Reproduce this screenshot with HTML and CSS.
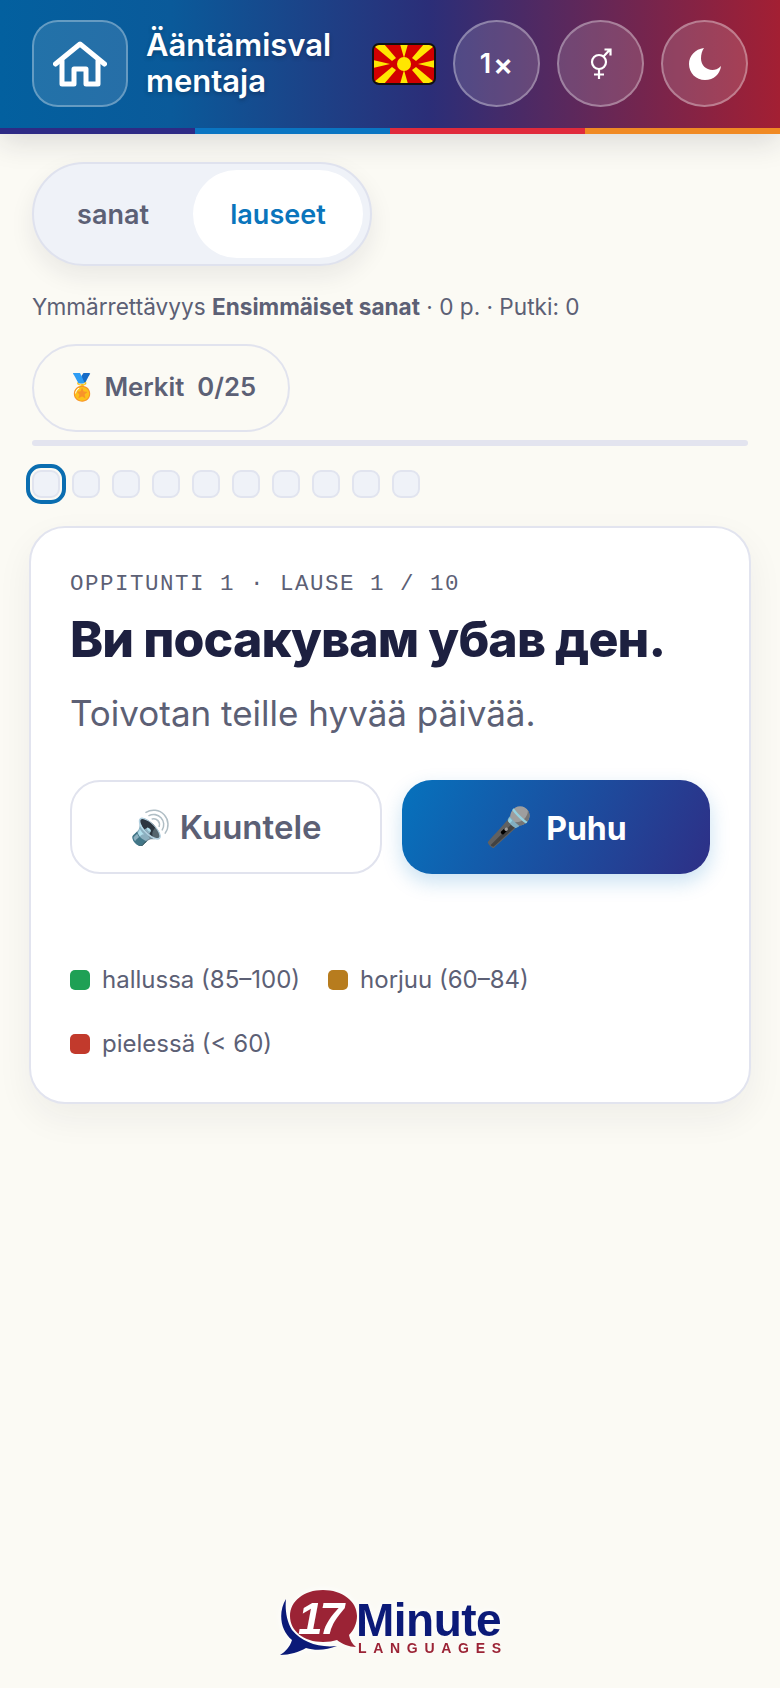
FILE: index.html
```html
<!DOCTYPE html>
<html lang="fi">
<head>
    <title>Ääntämisvalmentaja</title>
    <meta name="viewport" content="width=device-width, initial-scale=1.0">
    <link rel="stylesheet" href="styles.css">
</head>
<body>
    <header class="topbar">
        <div class="topbar-row">
            <button class="home-btn" aria-label="Koti">
                <svg width="54" height="46" viewBox="0 0 54 46" fill="none" stroke="#fff" stroke-width="5" stroke-linecap="round" stroke-linejoin="round">
                    <path d="M2.5 23 27 3 51.5 23"/>
                    <path d="M9 20V43H21V28H33V43H45V20"/>
                </svg>
            </button>
            <h1 class="app-title">Ääntämisval<br>mentaja</h1>
            <svg class="flag" viewBox="0 0 64 42">
                <rect x="1" y="1" width="62" height="40" rx="6" fill="#d20000"/>
                <g fill="#ffe600">
                    <path d="M28 1h8l-4 14z"/>
                    <path d="M28 41h8l-4-14z"/>
                    <path d="M1 17v8l17-4z"/>
                    <path d="M63 17v8l-17-4z"/>
                    <path d="M2 3 12 1 24 15 20 18z"/>
                    <path d="M62 3 52 1 40 15 44 18z"/>
                    <path d="M2 39 12 41 24 27 20 24z"/>
                    <path d="M62 39 52 41 40 27 44 24z"/>
                    <circle cx="32" cy="21" r="7"/>
                </g>
                <rect x="1" y="1" width="62" height="40" rx="6" fill="none" stroke="#111" stroke-width="2"/>
            </svg>
            <button class="round-btn speed-btn">1<span class="times">×</span></button>
            <button class="round-btn" aria-label="Sukupuoli">
                <svg width="22" height="32" viewBox="0 0 22 32" fill="none" stroke="#fff" stroke-width="2.2">
                    <circle cx="9" cy="14" r="7"/>
                    <path d="M9 21v10M4 26.500h10M13.500 8.500 20 1.500M14.500 1.500H20.500V7.500"/>
                </svg>
            </button>
            <button class="round-btn" aria-label="Tumma tila">
                <svg width="32" height="32" viewBox="0 0 32 32">
                    <path fill="#fff" d="M15 0C6 1 0 8 0 16C0 25 7 32 16 32C25 32 31 26 32 18C29 21 26 22 23.500 22C17 22 12 17 12 10.500C12 6 13 3 15 0z"/>
                </svg>
            </button>
        </div>
        <div class="stripe">
            <span class="stripe-indigo"></span>
            <span class="stripe-blue"></span>
            <span class="stripe-red"></span>
            <span class="stripe-orange"></span>
        </div>
    </header>

    <main class="content">
        <div class="segment">
            <button class="segment-item">sanat</button>
            <button class="segment-item active">lauseet</button>
        </div>

        <p class="meta">Ymmärrettävyys <b>Ensimmäiset sanat</b> · 0 p. · Putki: 0</p>

        <button class="badges-btn"><span class="emoji">🏅</span> Merkit&nbsp; 0/25</button>

        <div class="progress"></div>

        <div class="dots">
            <span class="dot current"></span>
            <span class="dot"></span>
            <span class="dot"></span>
            <span class="dot"></span>
            <span class="dot"></span>
            <span class="dot"></span>
            <span class="dot"></span>
            <span class="dot"></span>
            <span class="dot"></span>
            <span class="dot"></span>
        </div>

        <section class="card">
            <div class="lesson-label">OPPITUNTI 1 · LAUSE 1 / 10</div>
            <h2 class="sentence" lang="mk">Ви посакувам убав ден.</h2>
            <p class="translation">Toivotan teille hyvää päivää.</p>
            <div class="actions">
                <button class="action listen"><span class="emoji">🔊</span> Kuuntele</button>
                <button class="action speak"><span class="emoji">🎤</span> Puhu</button>
            </div>
            <ul class="legend">
                <li><span class="swatch good"></span>hallussa (85–100)</li>
                <li><span class="swatch mid"></span>horjuu (60–84)</li>
                <li><span class="swatch bad"></span>pielessä (&lt; 60)</li>
            </ul>
        </section>
    </main>

    <footer class="logo">
        <div class="logo-mark">
            <svg width="80" height="66" viewBox="0 0 80 66">
                <path fill="#0b1a78" d="M6 9C-2 22 0 40 12 50C10 57 5 62 0 65C10 65 19 62 26 58C36 61 47 60 57 56C38 58 22 52 12 40C6 30 5 18 6 9z"/>
                <path fill="#9b2335" d="M43 0C24 0 10 11 10 26C10 41 24 52 43 52C49 52 53 51 57 50C62 54 69 57 76 57C72 54 70 50 69 45C74 40 77 33 77 26C77 11 62 0 43 0z"/>
            </svg>
            <span class="logo-num">17</span>
        </div>
        <div class="logo-words">
            <span class="logo-name">Minute</span>
            <span class="logo-sub">LANGUAGES</span>
        </div>
    </footer>
</body>
</html>
```

FILE: styles.css
```css
* {
    box-sizing: border-box;
}

html, body {
    height: 100%;
}

body {
    margin: 0;
    background-color: #fbfaf4;
    font-family: Inter, "Noto Sans", sans-serif;
    color: #5c6075;
    display: flex;
    flex-direction: column;
    min-height: 1688px;
}

button {
    font-family: inherit;
    cursor: pointer;
}

.topbar {
    background: linear-gradient(90deg, #03609f 0%, #0a5a9a 22%, #2b2e78 55%, #a31f33 100%);
    box-shadow: 0 8px 28px rgba(30, 30, 50, 0.14);
}

.topbar-row {
    height: 128px;
    padding: 20px 33px 21px 32px;
    display: flex;
    align-items: center;
}

.home-btn {
    width: 96px;
    height: 87px;
    flex: none;
    border-radius: 26px;
    border: 2px solid rgba(255, 255, 255, 0.3);
    background: rgba(255, 255, 255, 0.12);
    display: flex;
    align-items: center;
    justify-content: center;
    padding: 0;
}

.app-title {
    margin: 0 0 2px 18px;
    width: 226px;
    flex: none;
    color: #fff;
    font-size: 31px;
    line-height: 36px;
    font-weight: 600;
    text-shadow: 0 2px 4px rgba(0, 0, 0, 0.25);
}

.flag {
    width: 64px;
    height: 42px;
    flex: none;
}

.round-btn {
    width: 87px;
    height: 87px;
    flex: none;
    margin-left: 17px;
    border-radius: 50%;
    border: 2px solid rgba(255, 255, 255, 0.32);
    background: rgba(255, 255, 255, 0.14);
    color: #fff;
    display: flex;
    align-items: center;
    justify-content: center;
    padding: 0;
}

.speed-btn {
    font-size: 27px;
    font-weight: 600;
}

.times {
    font-size: 30px;
    margin-left: 2px;
}

.stripe {
    height: 6px;
    display: flex;
}

.stripe span {
    flex: 1;
}

.stripe-indigo { background-color: #2e2a85; }
.stripe-blue { background-color: #0a75c2; }
.stripe-red { background-color: #e02a3c; }
.stripe-orange { background-color: #f08a24; }

.content {
    padding: 28px 32px 0;
    flex: 1;
}

.segment {
    width: 340px;
    height: 104px;
    padding: 6px 7px;
    border-radius: 52px;
    border: 2px solid #dfe2ee;
    background-color: #eff2f8;
    box-shadow: 0 10px 24px rgba(30, 30, 50, 0.08);
    display: flex;
    align-items: stretch;
    justify-content: space-between;
}

.segment-item {
    border: none;
    background: none;
    padding: 0;
    width: 170px;
    border-radius: 44px;
    font-size: 27px;
    font-weight: 600;
    color: #5c6075;
}

.segment-item:first-child {
    width: 144px;
}

.segment-item.active {
    background-color: #fff;
    color: #0a75bc;
}

.meta {
    margin: 24px 0 0;
    font-size: 22.600px;
    line-height: 34px;
}

.meta b {
    font-weight: 700;
}

.badges-btn {
    display: block;
    margin-top: 20px;
    width: 258px;
    height: 88px;
    padding: 0 0 3px;
    border-radius: 44px;
    border: 2px solid #e1e3ee;
    background: none;
    color: #5c6075;
    font-size: 25.700px;
    font-weight: 600;
}

.emoji {
    font-family: "Noto Color Emoji", sans-serif;
}

.progress {
    height: 6px;
    margin-top: 8px;
    border-radius: 3px;
    background-color: #e3e4ef;
}

.dots {
    display: flex;
    gap: 12px;
    margin-top: 24px;
}

.dot {
    width: 28px;
    height: 28px;
    border-radius: 9px;
    border: 2px solid #e1e4ef;
    background-color: #eff2f8;
}

.dot.current {
    outline: 4px solid #0a6db0;
    outline-offset: 2px;
}

.card {
    margin: 28px -3px 0;
    height: 578px;
    padding: 42px 39px 0;
    background-color: #fff;
    border: 2px solid #e2e4ef;
    border-radius: 36px;
    box-shadow: 0 14px 36px rgba(30, 30, 50, 0.06);
}

.lesson-label {
    font-family: "Liberation Mono", monospace;
    font-size: 22.500px;
    line-height: 28px;
    letter-spacing: 1.500px;
    color: #5c6075;
}

.sentence {
    margin: 11px 0 0;
    font-size: 50px;
    line-height: 60px;
    font-weight: 800;
    letter-spacing: -0.900px;
    color: #1d2040;
}

.translation {
    margin: 22px 0 0;
    font-size: 35px;
    line-height: 44px;
    color: #5c6075;
}

.actions {
    display: flex;
    gap: 20px;
    margin-top: 45px;
}

.action {
    flex: 1;
    height: 94px;
    border-radius: 30px;
    font-size: 33px;
    font-weight: 600;
    padding: 0;
}

.listen {
    background-color: #fff;
    border: 2px solid #e1e3ee;
    color: #5c6075;
}

.speak {
    background: linear-gradient(115deg, #0672bd 0%, #2e2f86 100%);
    border: none;
    color: #fff;
    font-size: 32px;
    font-weight: 700;
    box-shadow: 0 8px 20px rgba(10, 117, 194, 0.22);
}

.speak .emoji {
    font-size: 38px;
    margin-right: 6px;
}

.legend {
    list-style: none;
    margin: 90px 0 0;
    padding: 0;
    display: flex;
    flex-wrap: wrap;
    column-gap: 28px;
    row-gap: 32px;
    font-size: 24px;
    line-height: 32px;
}

.legend li {
    display: flex;
    align-items: center;
    gap: 12px;
}

.swatch {
    width: 20px;
    height: 20px;
    border-radius: 5px;
}

.swatch.good { background-color: #1fa055; }
.swatch.mid { background-color: #b77c1e; }
.swatch.bad { background-color: #c23a2c; }

.logo {
    height: 100px;
    margin-bottom: 32px;
    display: flex;
    justify-content: center;
    align-items: flex-end;
    filter: drop-shadow(0 0 4px #fff);
}

.logo-mark {
    position: relative;
    width: 80px;
    height: 66px;
    flex: none;
    margin-right: -4px;
}

.logo-mark svg {
    display: block;
}

.logo-num {
    position: absolute;
    left: 18px;
    top: 6px;
    font-family: "Liberation Sans", sans-serif;
    font-size: 44px;
    line-height: 46px;
    font-weight: 700;
    font-style: italic;
    letter-spacing: -3px;
    color: #fff;
}

.logo-words {
    width: 144px;
    display: flex;
    flex-direction: column;
}

.logo-name {
    font-family: "Liberation Sans", sans-serif;
    font-size: 46px;
    line-height: 40px;
    font-weight: 700;
    letter-spacing: -0.500px;
    color: #0b1a78;
}

.logo-sub {
    font-family: "Liberation Sans", sans-serif;
    font-size: 14px;
    line-height: 16px;
    font-weight: 700;
    letter-spacing: 6.700px;
    margin-left: 2px;
    white-space: nowrap;
    color: #9b2335;
}
```
